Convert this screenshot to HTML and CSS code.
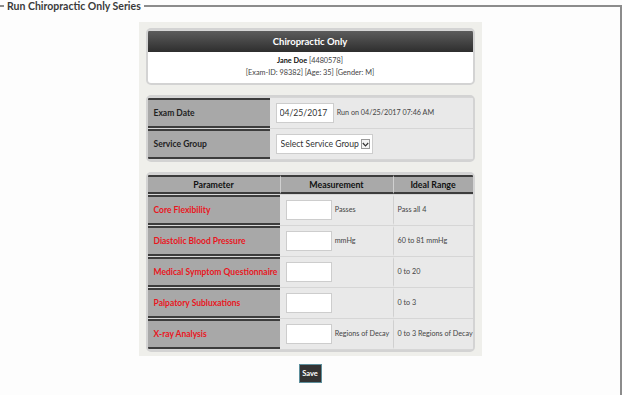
FILE: index.html
```html
<!DOCTYPE html>
<html lang="en">
<head>
    <meta charset="UTF-8">
    <meta name="viewport" content="width=device-width, initial-scale=1.0">
    <title>Run Chiropractic Only Series</title>
    <link rel="stylesheet" href="styles.css">
</head>
<body>
    <fieldset class="series">
        <legend>Run Chiropractic Only Series</legend>
        <div class="panel">
            <div class="box">
                <div class="patient-title">Chiropractic Only</div>
                <div class="patient-info">
                    <p><strong>Jane Doe</strong> [4480578]</p>
                    <p>[Exam-ID: 98382] [Age: 35] [Gender: M]</p>
                </div>
            </div>

            <div class="box">
                <table class="grid exam">
                    <colgroup>
                        <col class="w-label">
                        <col>
                    </colgroup>
                    <tr>
                        <th class="label">Exam Date</th>
                        <td>
                            <input class="date" type="text" value="04/25/2017">
                            <span class="note">Run on 04/25/2017 07:46 AM</span>
                        </td>
                    </tr>
                    <tr>
                        <th class="label">Service Group</th>
                        <td>
                            <span class="select">
                                <select>
                                    <option>Select Service Group</option>
                                </select>
                                <span class="arrow">
                                    <svg width="7" height="5" viewBox="0 0 7 5"><path d="M0.8 1 L3.5 3.8 L6.2 1" fill="none" stroke="#333" stroke-width="1.2"/></svg>
                                </span>
                            </span>
                        </td>
                    </tr>
                </table>
            </div>

            <div class="box">
                <table class="grid params">
                    <colgroup>
                        <col class="w-param">
                        <col class="w-meas">
                        <col>
                    </colgroup>
                    <tr class="head">
                        <th>Parameter</th>
                        <th>Measurement</th>
                        <th>Ideal Range</th>
                    </tr>
                    <tr>
                        <th class="label red">Core Flexibility</th>
                        <td><input class="value" type="text"> <span class="unit">Passes</span></td>
                        <td class="range">Pass all 4</td>
                    </tr>
                    <tr>
                        <th class="label red">Diastolic Blood Pressure</th>
                        <td><input class="value" type="text"> <span class="unit">mmHg</span></td>
                        <td class="range">60 to 81 mmHg</td>
                    </tr>
                    <tr>
                        <th class="label red">Medical Symptom Questionnaire</th>
                        <td><input class="value" type="text"></td>
                        <td class="range">0 to 20</td>
                    </tr>
                    <tr>
                        <th class="label red">Palpatory Subluxations</th>
                        <td><input class="value" type="text"></td>
                        <td class="range">0 to 3</td>
                    </tr>
                    <tr>
                        <th class="label red">X-ray Analysis</th>
                        <td><input class="value" type="text"> <span class="unit">Regions of Decay</span></td>
                        <td class="range">0 to 3 Regions of Decay</td>
                    </tr>
                </table>
            </div>
        </div>
        <div class="actions">
            <button type="button" class="save">Save</button>
        </div>
    </fieldset>
</body>
</html>
```

FILE: styles.css
```css
body {
    font-family: Lato, "Open Sans", sans-serif;
    background-color: #fdfdfd;
    color: #333;
    margin: 0;
    padding: 0;
}

.series {
    margin: 0;
    padding: 0 0 20px;
    border: none;
    border-top: 2px solid #8c8c8c;
    border-right: 2px solid #8c8c8c;
}

.series legend {
    margin-left: 4px;
    padding: 0 3px 0 3px;
    font-size: 10.5px;
    font-weight: bold;
    color: #3a3a3a;
}

.panel {
    width: 329px;
    margin: 10px auto 0;
    padding: 6px 7px 4px;
    background: #efefeb;
}

.box {
    border: 2px solid #d3d3d3;
    border-radius: 5px;
    background: #d6d6d6;
    overflow: hidden;
    margin-bottom: 10px;
}

.box:last-child {
    margin-bottom: 0;
}

.patient-title {
    height: 21px;
    line-height: 22px;
    margin-top: 1px;
    text-align: center;
    font-size: 9.5px;
    font-weight: bold;
    color: #fff;
    background: linear-gradient(#5c5c5c, #2e2e2e);
}

.patient-info {
    background: #fff;
    padding: 3px 0 4px;
    text-align: center;
    font-size: 7.3px;
    color: #444;
}

.patient-info p {
    margin: 0;
    line-height: 12px;
}

.patient-info strong {
    color: #111;
}

/* shared table look */
.grid {
    width: 100%;
    table-layout: fixed;
    border-collapse: separate;
    border-spacing: 0 1px;
    font-size: 8.5px;
}

.w-label {
    width: 122px;
}

.w-param {
    width: 132px;
}

.w-meas {
    width: 113px;
}

.grid th,
.grid td {
    text-align: left;
    padding: 3px 6px;
    line-height: 20px;
    background: #e9e9e9;
    border-top: 2px solid #e9e9e9;
    border-bottom: 2px solid #e9e9e9;
    white-space: nowrap;
    overflow: hidden;
}

.grid th.label {
    background: #a8a8a8;
    border-top-color: #3c3c3c;
    border-bottom-color: #3c3c3c;
    color: #222;
}

.red {
    color: #e8161e !important;
}

.params .head th {
    background: #a9a9a9;
    border-top-color: #3c3c3c;
    border-bottom-color: #3c3c3c;
    text-align: center;
    padding: 0 2px;
    line-height: 15px;
    font-size: 8.8px;
    color: #111;
}

.params .head th + th,
.params td.range {
    border-left: 1px solid #d0d0d0;
}

input {
    font-family: Lato, "Open Sans", sans-serif;
    box-sizing: border-box;
    height: 20px;
    border: 1px solid #cdcdcd;
    background: #fff;
    vertical-align: top;
    margin: 0;
}

.date {
    width: 58px;
    padding: 0 3px;
    font-size: 8.6px;
    color: #333;
}

.note,
.unit {
    font-size: 7.2px;
    color: #444;
    vertical-align: top;
    margin-left: 1px;
}

.value {
    width: 46px;
}

.grid td.range {
    font-size: 7.2px;
    color: #444;
    padding-left: 4px;
    padding-right: 1px;
}

.select {
    display: inline-flex;
    align-items: center;
    box-sizing: border-box;
    height: 20px;
    width: 97px;
    padding: 0 4px;
    border: 1px solid #cdcdcd;
    background: #fff;
    vertical-align: top;
}

.select select {
    appearance: none;
    -webkit-appearance: none;
    border: none;
    background: transparent;
    font-family: Lato, "Open Sans", sans-serif;
    font-size: 8.6px;
    color: #333;
    padding: 0;
    margin: 0;
}

.select .arrow {
    display: inline-flex;
    align-items: center;
    justify-content: center;
    width: 8px;
    height: 8px;
    border: 1px solid #999;
    background: #f4f4f4;
    margin-left: 1px;
}

.actions {
    display: flex;
    justify-content: center;
    padding-top: 8px;
}

.save {
    font-family: Lato, "Open Sans", sans-serif;
    font-size: 7.5px;
    font-weight: bold;
    color: #fff;
    background: #333;
    border: 1px solid #5d8f9c;
    padding: 0 2px;
    height: 19px;
    width: 23px;
    cursor: pointer;
}
```
